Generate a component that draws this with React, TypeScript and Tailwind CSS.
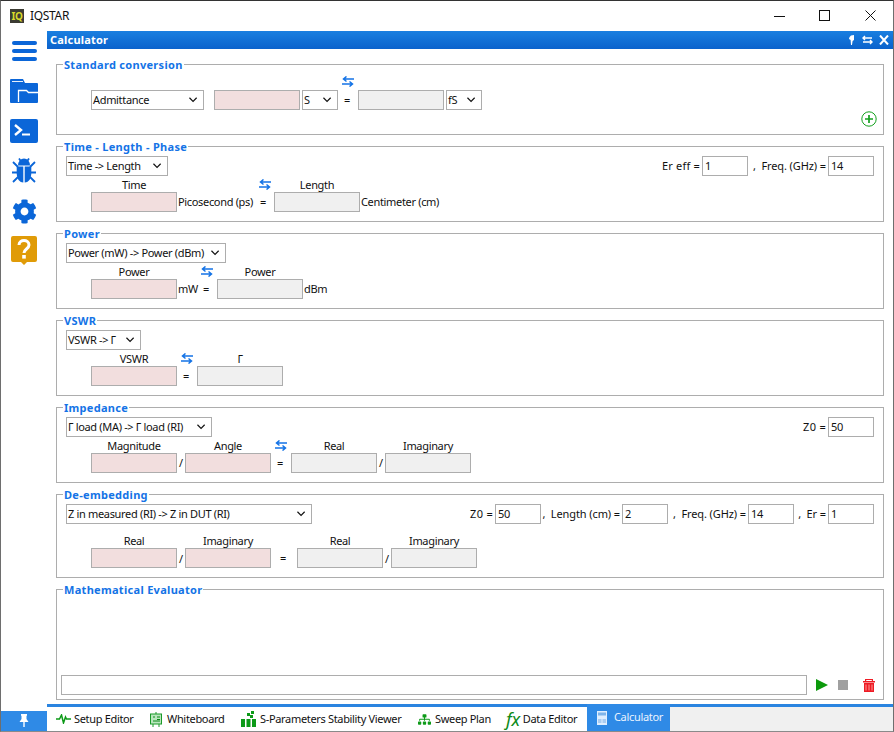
import type { ReactNode } from "react";
import { FaCog, FaSitemap } from "react-icons/fa";

function Swap({ className }: { className: string }) {
  return (
    <svg viewBox="0 0 12 11" className={`absolute w-[12px] h-[11px] ${className}`} fill="none" stroke="#1473e6" strokeWidth="1.5">
      <path d="M12 3H2M4.5 .5 1.5 3l3 2.5" />
      <path d="M0 8h10M7.5 5.5 10.5 8l-3 2.5" />
    </svg>
  );
}

function Chevron() {
  return (
    <svg viewBox="0 0 10 6" className="absolute right-[5px] top-[6px] w-[9px] h-[6px]" fill="none" stroke="#111" strokeWidth="1.3">
      <path d="M.5 .5 4.5 4.5 8.5 .5" />
    </svg>
  );
}

function Select({ className, children }: { className: string; children: ReactNode }) {
  return (
    <div className={`absolute h-[20px] border border-[#adadad] bg-white pl-[1px] leading-[18px] whitespace-nowrap ${className}`}>
      {children}
      <Chevron />
    </div>
  );
}

function Pink({ className }: { className: string }) {
  return <div className={`absolute w-[86px] h-[20px] border border-[#adadad] bg-[#f2dede] ${className}`} />;
}

function Gray({ className }: { className: string }) {
  return <div className={`absolute w-[86px] h-[20px] border border-[#adadad] bg-[#f0f0f0] ${className}`} />;
}

function Num({ className, children }: { className: string; children: ReactNode }) {
  return (
    <div className={`absolute w-[46px] h-[20px] border border-[#adadad] bg-white pl-[2px] leading-[18px] ${className}`}>{children}</div>
  );
}

function Label({ className, children }: { className: string; children: ReactNode }) {
  return <div className={`absolute leading-[14px] whitespace-nowrap ${className}`}>{children}</div>;
}

// labels in front of the number boxes, anchored on their right edge
function Param({ className, children }: { className: string; children: ReactNode }) {
  return <div className={`absolute top-[12px] leading-[14px] whitespace-pre ${className}`}>{children}</div>;
}

function Center({ className, children }: { className: string; children: ReactNode }) {
  return <div className={`absolute w-[86px] text-center leading-[14px] ${className}`}>{children}</div>;
}

function Panel({ title, className, children }: { title: string; className: string; children: ReactNode }) {
  return (
    <section className={`relative border border-[#adadad] ${className}`}>
      <h2 className="absolute left-[6px] top-[-7px] bg-white px-[1px] text-[11px] font-bold leading-[14px] tracking-[0.3px] text-[#1473e6]">{title}</h2>
      {children}
    </section>
  );
}

function Sidebar() {
  return (
    <aside className="relative w-[46px] shrink-0">
      <div className="absolute left-[11px] top-[10px] flex w-[25px] flex-col gap-[4px]">
        <span className="h-[4px] rounded-full bg-[#0b66d8]" />
        <span className="h-[4px] rounded-full bg-[#0b66d8]" />
        <span className="h-[4px] rounded-full bg-[#0b66d8]" />
      </div>
      <svg viewBox="0 0 28 24" className="absolute left-[9px] top-[48px] w-[28px] h-[24px]">
        <path d="M1 0h12l2 4h12a1 1 0 0 1 1 1v18a1 1 0 0 1-1 1H1a1 1 0 0 1-1-1V1a1 1 0 0 1 1-1z" fill="#0b66d8" />
        <path d="M2 2.500h11" stroke="#fff" strokeWidth=".9" />
        <path d="M8.500 23V11.500h8l2 2H28" fill="none" stroke="#fff" strokeWidth="1.300" />
      </svg>
      <svg viewBox="0 0 28 24" className="absolute left-[9px] top-[88px] w-[28px] h-[24px]">
        <rect width="28" height="24" rx="2" fill="#0b66d8" />
        <path d="M5 6l6 5-6 5" fill="none" stroke="#fff" strokeWidth="2.400" />
        <path d="M12 15.500h8" stroke="#fff" strokeWidth="2" />
      </svg>
      <svg viewBox="0 0 24 25" className="absolute left-[11px] top-[127px] w-[24px] h-[25px]" fill="#0b66d8">
        <path d="M6 7.500a6 7 0 0 1 12 0z" />
        <path d="M4.700 8.500h6.600V24.500C7 24.500 4.700 20 4.700 15z" />
        <path d="M19.300 8.500h-6.600V24.500C17 24.500 19.300 20 19.300 15z" />
        <path d="M7 .5l2.500 3.500M17 .5L14.500 4M1 4l5 5M23 4l-5 5M0 14.500h6M24 14.500h-6M1 24l5-5M23 24l-5-5" fill="none" stroke="#0b66d8" strokeWidth="1.800" />
      </svg>
      <FaCog className="absolute left-[11px] top-[168px] w-[25px] h-[25px] text-[#0b66d8]" />
      <svg viewBox="0 0 26 29" className="absolute left-[10px] top-[205px] w-[26px] h-[29px]">
        <path d="M2 0h22a2 2 0 0 1 2 2v22a2 2 0 0 1-2 2h-8l-3 3-3-3H2a2 2 0 0 1-2-2V2a2 2 0 0 1 2-2z" fill="#e09b07" />
        <path d="M8 9c0-6 10-6 10 0 0 4-5 4-5 8" fill="none" stroke="#fff" strokeWidth="3" />
        <rect x="11.200" y="19" width="3.600" height="3.600" fill="#fff" />
      </svg>
    </aside>
  );
}

function Tab({ icon, label, className }: { icon: ReactNode; label: string; className: string }) {
  return (
    <div className={`absolute top-0 flex h-[24px] items-center whitespace-nowrap ${className}`}>
      {icon}
      <span>{label}</span>
    </div>
  );
}

export default function App() {
  return (
    <div className="relative h-[732px] w-[894px] overflow-hidden border-x border-t border-x-[#6e6e6e] border-t-[#333] border-b border-b-[#8a8a8a] bg-white text-[11px] tracking-[-0.33px] text-[#111] font-['Noto_Sans',sans-serif]">
      <header className="flex h-[30px] items-center pl-[9px]">
        <div className="flex h-[14px] w-[14px] items-center justify-center bg-[#3b3b33] text-[10px] font-bold leading-none tracking-[-0.5px] text-[#d8d82a]">IQ</div>
        <span className="ml-[6px] text-[12px]">IQSTAR</span>
        <svg viewBox="0 0 120 12" className="absolute left-[772px] top-[9px] w-[120px] h-[12px]" fill="none" stroke="#111">
          <path d="M1 6.500h11" />
          <rect x="46.500" y=".5" width="10" height="10" />
          <path d="M92.500 .5l10 10M102.500 .5l-10 10" />
        </svg>
      </header>
      <div className="flex h-[700px]">
        <Sidebar />
        <main className="relative flex-1">
          <div className="flex h-[18px] items-center justify-between bg-gradient-to-b from-[#1a7fe0] to-[#0b62cc] pl-[3px] pr-[4px] text-[11px] font-bold tracking-[0.2px] text-white">
            <span>Calculator</span>
            <svg viewBox="0 0 42 10" className="w-[42px] h-[10px]" fill="none" stroke="#fff" strokeWidth="1.400">
              <path d="M4 .5 7 0v5L5.600 6 5 10H4L3.600 5 2 4C2 2.500 3 1.500 4 .5z" fill="#fff" stroke="none" />
              <path d="M25 3h-9M18 1l-2 2 2 2M16 7h9M23 5l2 2-2 2" />
              <path d="M33 .5l8 9M41 .5l-8 9" strokeWidth="2" />
            </svg>
          </div>
          <div className="absolute left-[9px] top-[33px] flex w-[828px] flex-col gap-[11px]">
            <Panel title="Standard conversion" className="h-[71px]">
              <Select className="left-[34px] top-[25px] w-[113px]">Admittance</Select>
              <Pink className="left-[157px] top-[25px]" />
              <Select className="left-[245px] top-[25px] w-[36px]">S</Select>
              <Label className="left-[287px] top-[28px]">=</Label>
              <Swap className="left-[285px] top-[11px]" />
              <Gray className="left-[301px] top-[25px]" />
              <Select className="left-[389px] top-[25px] w-[36px]">fS</Select>
              <svg viewBox="0 0 16 16" className="absolute left-[804px] top-[46px] w-[16px] h-[16px]" fill="none" stroke="#14a01e">
                <circle cx="8" cy="8" r="7.200" />
                <path d="M8 4v8M4 8h8" strokeWidth="1.700" />
              </svg>
            </Panel>
            <Panel title="Time - Length - Phase" className="h-[76px]">
              <Select className="left-[9px] top-[9px] w-[102px]">{"Time -> Length"}</Select>
              <Param className="right-[183px] tracking-[0.2px]">Er eff =</Param>
              <Num className="left-[645px] top-[9px]">1</Num>
              <Param className="right-[57px] tracking-[-0.1px]">{",  Freq. (GHz) ="}</Param>
              <Num className="left-[771px] top-[9px]">14</Num>
              <Center className="left-[34px] top-[31px]">Time</Center>
              <Swap className="left-[202px] top-[32px]" />
              <Center className="left-[217px] top-[31px]">Length</Center>
              <Pink className="left-[34px] top-[45px]" />
              <Label className="left-[121px] top-[48px]">Picosecond (ps)</Label>
              <Label className="left-[203px] top-[48px]">=</Label>
              <Gray className="left-[217px] top-[45px]" />
              <Label className="left-[304px] top-[48px]">Centimeter (cm)</Label>
            </Panel>
            <Panel title="Power" className="h-[76px]">
              <Select className="left-[9px] top-[9px] w-[160px]">{"Power (mW) -> Power (dBm)"}</Select>
              <Center className="left-[34px] top-[31px]">Power</Center>
              <Swap className="left-[144px] top-[32px]" />
              <Center className="left-[160px] top-[31px]">Power</Center>
              <Pink className="left-[34px] top-[45px]" />
              <Label className="left-[121px] top-[48px]">mW</Label>
              <Label className="left-[146px] top-[48px]">=</Label>
              <Gray className="left-[160px] top-[45px]" />
              <Label className="left-[247px] top-[48px]">dBm</Label>
            </Panel>
            <Panel title="VSWR" className="h-[76px]">
              <Select className="left-[9px] top-[9px] w-[75px]">{"VSWR -> Γ"}</Select>
              <Center className="left-[34px] top-[31px]">VSWR</Center>
              <Swap className="left-[124px] top-[32px]" />
              <Center className="left-[140px] top-[31px]">Γ</Center>
              <Pink className="left-[34px] top-[45px]" />
              <Label className="left-[126px] top-[48px]">=</Label>
              <Gray className="left-[140px] top-[45px]" />
            </Panel>
            <Panel title="Impedance" className="h-[76px]">
              <Select className="left-[9px] top-[9px] w-[146px]">{"Γ load (MA) -> Γ load (RI)"}</Select>
              <Param className="right-[57px] tracking-[0.3px]">Z0 =</Param>
              <Num className="left-[771px] top-[9px]">50</Num>
              <Center className="left-[34px] top-[31px]">Magnitude</Center>
              <Center className="left-[128px] top-[31px]">Angle</Center>
              <Swap className="left-[218px] top-[32px]" />
              <Center className="left-[234px] top-[31px]">Real</Center>
              <Center className="left-[328px] top-[31px]">Imaginary</Center>
              <Pink className="left-[34px] top-[45px]" />
              <Label className="left-[122px] top-[48px]">/</Label>
              <Pink className="left-[128px] top-[45px]" />
              <Label className="left-[220px] top-[48px]">=</Label>
              <Gray className="left-[234px] top-[45px]" />
              <Label className="left-[322px] top-[48px]">/</Label>
              <Gray className="left-[328px] top-[45px]" />
            </Panel>
            <Panel title="De-embedding" className="h-[84px]">
              <Select className="left-[9px] top-[9px] w-[246px]">{"Z in measured (RI) -> Z in DUT (RI)"}</Select>
              <Param className="right-[390px] tracking-[0.3px]">Z0 =</Param>
              <Num className="left-[438px] top-[9px]">50</Num>
              <Param className="right-[263px] tracking-[-0.1px]">{",  Length (cm) ="}</Param>
              <Num className="left-[565px] top-[9px]">2</Num>
              <Param className="right-[137px] tracking-[-0.1px]">{",  Freq. (GHz) ="}</Param>
              <Num className="left-[691px] top-[9px]">14</Num>
              <Param className="right-[57px] tracking-[-0.1px]">{",  Er ="}</Param>
              <Num className="left-[771px] top-[9px]">1</Num>
              <Center className="left-[34px] top-[39px]">Real</Center>
              <Center className="left-[128px] top-[39px]">Imaginary</Center>
              <Center className="left-[240px] top-[39px]">Real</Center>
              <Center className="left-[334px] top-[39px]">Imaginary</Center>
              <Pink className="left-[34px] top-[53px]" />
              <Label className="left-[122px] top-[57px]">/</Label>
              <Pink className="left-[128px] top-[53px]" />
              <Label className="left-[223px] top-[56px]">=</Label>
              <Gray className="left-[240px] top-[53px]" />
              <Label className="left-[328px] top-[57px]">/</Label>
              <Gray className="left-[334px] top-[53px]" />
            </Panel>
            <Panel title="Mathematical Evaluator" className="h-[111px]">
              <div className="absolute left-[4px] top-[85px] h-[20px] w-[746px] border border-[#adadad]" />
              <svg viewBox="0 0 60 14" className="absolute left-[759px] top-[88px] w-[60px] h-[14px]">
                <path d="M0 1l12 6-12 6z" fill="#0c9a0c" />
                <rect x="22" y="2" width="10" height="10" fill="#a0a0a0" />
                <path d="M47 3h12v1.500H47z M49 3V1h8v2h-1.200V2h-5.600v1z M48 5h10v9H48z" fill="#ee1c25" />
                <path d="M50 6.500v6M53 6.500v6M56 6.500v6" stroke="#ff9a9a" />
              </svg>
            </Panel>
          </div>
        </main>
      </div>
      <div className="absolute left-[46px] right-0 top-[703px] h-[3px] bg-[#2a84e0]" />
      <div className="absolute left-0 top-[710px] flex h-[20px] w-[46px] items-center justify-center bg-[#2f8ae6]">
        <svg viewBox="0 0 10 14" className="w-[10px] h-[14px]" fill="#fff">
          <path d="M2 0h6v1.500L7.500 2v3L9.500 8h-9l2-3V2L2 1.500z" />
          <rect x="4.300" y="8" width="1.400" height="5" />
        </svg>
      </div>
      <div className="absolute left-[46px] right-0 top-[706px] h-[24px]">
        <Tab className="left-[9px]" label="Setup Editor" icon={
          <svg viewBox="0 0 15 10" className="mr-[3px] w-[15px] h-[10px]" fill="none" stroke="#0d9a18" strokeWidth="1.500"><path d="M0 5h3.500l2-4 2 8 2-6 1 2H15" /></svg>
        } />
        <Tab className="left-[103px]" label="Whiteboard" icon={
          <svg viewBox="0 0 12 15" className="mr-[5px] w-[12px] h-[15px]" fill="none" stroke="#1a9a28"><rect x=".5" y="2" width="11" height="10" fill="#b9e6bd" /><path d="M3 5h2M7 5h3M7 7.500h3M3 9h7" stroke="#0d8a18" /><path d="M3 12v3M9 12v3M6 0v2" /></svg>
        } />
        <Tab className="left-[194px]" label="S-Parameters Stability Viewer" icon={
          <svg viewBox="0 0 15 16" className="mr-[4px] w-[15px] h-[16px]" fill="#0d9a18"><rect x="0" y="8" width="4" height="8" /><rect x="5.500" y="8" width="4" height="8" /><rect x="11" y="8" width="4" height="8" /><rect x="6" y="2" width="3" height="3" /><rect x="10" y="0" width="3" height="3" /><rect x="9" y="4" width="3" height="3" /></svg>
        } />
        <Tab className="left-[371px]" label="Sweep Plan" icon={<FaSitemap className="mr-[4px] w-[13px] h-[13px] text-[#0d9a18]" />} />
        <Tab className="left-[459px]" label="Data Editor" icon={
          <span className="mr-[3px] font-['Liberation_Serif',serif] text-[18px] italic leading-none text-[#0d8a18]">fx</span>
        } />
        <div className="absolute left-[540px] top-[-3px] flex h-[27px] w-[83px] items-center bg-[#2f8ae6] pl-[10px] text-[#eaf3ff]">
          <svg viewBox="0 0 10 14" className="mr-[7px] w-[10px] h-[14px]"><rect width="10" height="14" fill="#dfeeff" /><rect x="1" y="1.500" width="8" height="3" fill="#7fb4ea" /><rect x="1" y="8" width="3.500" height="4" fill="#a9ccf2" /><rect x="5.500" y="8" width="3.500" height="4" fill="#a9ccf2" /></svg>
          <span>Calculator</span>
        </div>
        <div className="absolute left-[623px] right-0 top-0 h-[24px] bg-[#f0f0f0]" />
      </div>
    </div>
  );
}
